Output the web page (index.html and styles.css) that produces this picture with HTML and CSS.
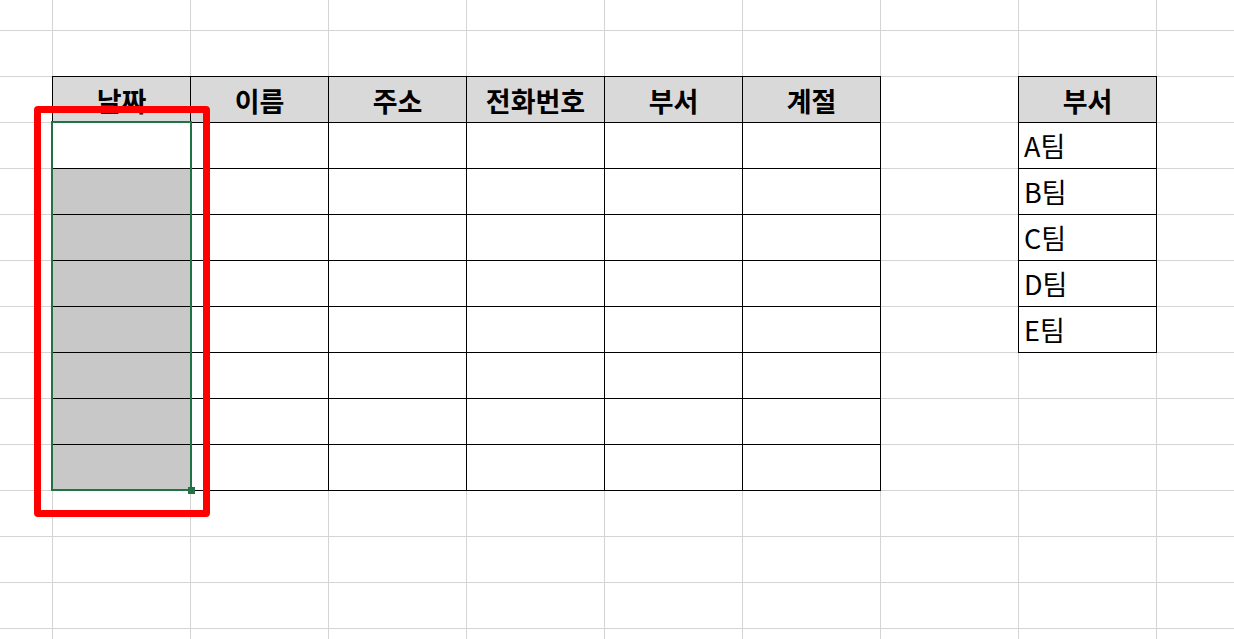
FILE: index.html
```html
<!DOCTYPE html>
<html lang="ko">
<head>
<meta charset="utf-8">
<title>Sheet</title>
<link rel="stylesheet" href="styles.css">
</head>
<body>
<div class="sheet">
  <div class="table-main">
    <div class="cell head">날짜</div>
    <div class="cell head">이름</div>
    <div class="cell head">주소</div>
    <div class="cell head">전화번호</div>
    <div class="cell head">부서</div>
    <div class="cell head">계절</div>

    <div class="cell"></div><div class="cell"></div><div class="cell"></div><div class="cell"></div><div class="cell"></div><div class="cell"></div>
    <div class="cell shade"></div><div class="cell"></div><div class="cell"></div><div class="cell"></div><div class="cell"></div><div class="cell"></div>
    <div class="cell shade"></div><div class="cell"></div><div class="cell"></div><div class="cell"></div><div class="cell"></div><div class="cell"></div>
    <div class="cell shade"></div><div class="cell"></div><div class="cell"></div><div class="cell"></div><div class="cell"></div><div class="cell"></div>
    <div class="cell shade"></div><div class="cell"></div><div class="cell"></div><div class="cell"></div><div class="cell"></div><div class="cell"></div>
    <div class="cell shade"></div><div class="cell"></div><div class="cell"></div><div class="cell"></div><div class="cell"></div><div class="cell"></div>
    <div class="cell shade"></div><div class="cell"></div><div class="cell"></div><div class="cell"></div><div class="cell"></div><div class="cell"></div>
    <div class="cell shade"></div><div class="cell"></div><div class="cell"></div><div class="cell"></div><div class="cell"></div><div class="cell"></div>
  </div>

  <div class="table-side">
    <div class="cell head">부서</div>
    <div class="cell text">A팀</div>
    <div class="cell text">B팀</div>
    <div class="cell text">C팀</div>
    <div class="cell text">D팀</div>
    <div class="cell text">E팀</div>
  </div>

  <div class="selection"><span class="handle"></span></div>
  <div class="annotation"></div>
</div>
</body>
</html>
```

FILE: styles.css
```css
* {
  box-sizing: border-box;
}

html, body {
  margin: 0;
  padding: 0;
  background: #ffffff;
}

body {
  font-family: "Noto Sans CJK KR", "Noto Sans", sans-serif;
  color: #000000;
  overflow: hidden;
}

.sheet {
  position: relative;
  display: grid;
  grid-template-columns: 52px repeat(8, 138px) 1fr;
  grid-template-rows: 30px repeat(13, 46px);
  width: 1234px;
  height: 639px;
  background-color: #ffffff;
  background-image:
    linear-gradient(to right, #d4d4d4 0, #d4d4d4 1px, transparent 1px),
    linear-gradient(to bottom, #d4d4d4 0, #d4d4d4 1px, transparent 1px);
  background-size: 138px 100%, 100% 46px;
  background-position: 52px 0, 0 30px;
}

.table-main,
.table-side {
  box-sizing: content-box;
  display: grid;
  grid-auto-rows: 46px;
  border-right: 1px solid #000;
  border-bottom: 1px solid #000;
  background: #ffffff;
  align-self: start;
  justify-self: start;
}

.table-main {
  grid-column: 2 / span 6;
  grid-row: 3 / span 9;
  width: 828px;
  height: 414px;
  grid-template-columns: repeat(6, 138px);
}

.table-side {
  grid-column: 9;
  grid-row: 3 / span 6;
  width: 138px;
  height: 276px;
  grid-template-columns: 138px;
}

.cell {
  border-left: 1px solid #000;
  border-top: 1px solid #000;
  min-width: 0;
}

.head {
  background: #d9d9d9;
  font-weight: 700;
  font-size: 27px;
  line-height: 1;
  display: flex;
  align-items: center;
  justify-content: center;
  padding-top: 1px;
}

.shade {
  background: #c8c8c8;
}

.text {
  font-size: 27px;
  line-height: 1;
  display: flex;
  align-items: flex-end;
  padding: 0 0 9px 5px;
}

.selection {
  position: absolute;
  left: 51px;
  top: 121px;
  width: 141px;
  height: 370px;
  border: 2px solid #217346;
}

.handle {
  position: absolute;
  right: -5px;
  bottom: -5px;
  width: 7px;
  height: 7px;
  background: #217346;
}

.annotation {
  position: absolute;
  left: 34px;
  top: 106px;
  width: 176px;
  height: 411px;
  border: 7px solid #ff0000;
  border-radius: 4px;
}
```
